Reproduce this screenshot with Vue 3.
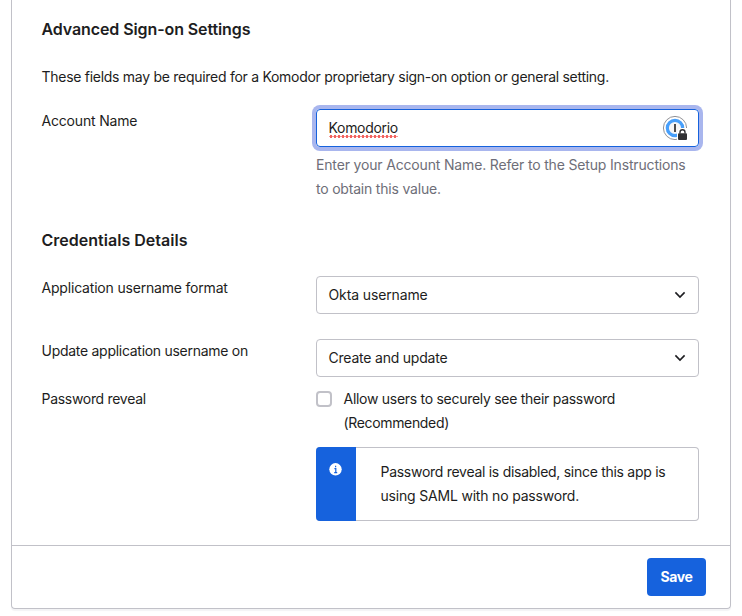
<script setup>
import { ref } from 'vue'

const accountName = ref('Komodorio')
const revealPassword = ref(false)
const selects = [
  { label: 'Application username format', value: 'Okta username', labelClass: 't-format', valueClass: 't-okta' },
  { label: 'Update application username on', value: 'Create and update', labelClass: 't-update', valueClass: 't-create' },
]
</script>

<template>
  <main class="page">
    <section class="card">
      <div class="content">
        <h2><span class="t-adv">Advanced Sign-on Settings</span></h2>
        <p class="intro"><span class="t-intro">These fields may be required for a Komodor proprietary sign-on option or general setting.</span></p>

        <div class="row account">
          <div class="label"><span class="t-account">Account Name</span></div>
          <div>
            <div class="box input">
              <span class="misspelled t-komo">{{ accountName }}</span>
              <svg class="onepass" width="26" height="26" viewBox="0 0 26 26">
                <circle cx="13" cy="13" r="11.6" fill="#fff" stroke="#85858a" stroke-width="0.9" />
                <circle cx="13" cy="13" r="7.7" fill="#f5f5f6" stroke="#479ffb" stroke-width="3.2" />
                <path d="M13 9v8" stroke="#4a4a4c" stroke-width="2" />
                <path d="M15 26V18.2c0-3 2.3-5.2 5.4-5.2H26V26z" fill="#fff" />
                <path d="M18 18.4v-1.2a2.5 2.5 0 0 1 5 0v1.2" fill="none" stroke="#303033" stroke-width="1.4" />
                <rect x="16" y="18.2" width="9" height="6.8" rx="1" fill="#303033" />
              </svg>
            </div>
            <div class="hint">
              <span class="t-hint1">Enter your Account Name. Refer to the Setup Instructions</span><br>
              <span class="t-hint2">to obtain this value.</span>
            </div>
          </div>
        </div>

        <h2 class="credentials"><span class="t-cred">Credentials Details</span></h2>

        <div v-for="item in selects" :key="item.label" class="row select-row">
          <div class="label"><span :class="item.labelClass">{{ item.label }}</span></div>
          <div class="box select">
            <span :class="item.valueClass">{{ item.value }}</span>
            <svg width="12" height="8" viewBox="0 0 12 8">
              <path d="M1.4 1.4 6 6l4.6-4.6" fill="none" stroke="#1d1d21" stroke-width="1.6" />
            </svg>
          </div>
        </div>

        <div class="row reveal">
          <div class="label"><span class="t-reveal">Password reveal</span></div>
          <div>
            <label class="check">
              <input v-model="revealPassword" type="checkbox">
              <span>
                <span class="t-allow">Allow users to securely see their password</span><br>
                <span class="t-rec">(Recommended)</span>
              </span>
            </label>
            <div class="notice">
              <div class="notice-icon">
                <svg width="13" height="13" viewBox="0 0 13 13">
                  <circle cx="6.5" cy="6.3" r="6.2" fill="#fff" />
                  <path d="M5.4 5.6h1.4v3.8M5.2 9.6h3M6.6 2.7v1.6" fill="none" stroke="#1662dd" stroke-width="1.2" />
                </svg>
              </div>
              <div class="notice-text">
                <span class="t-note1">Password reveal is disabled, since this app is</span><br>
                <span class="t-note2">using SAML with no password.</span>
              </div>
            </div>
          </div>
        </div>
      </div>
      <footer>
        <button type="button"><span class="t-save">Save</span></button>
      </footer>
    </section>
  </main>
</template>

<style>
body {
  margin: 0;
  background: #fff;
}
</style>

<style scoped>
.page {
  box-sizing: border-box;
  height: 616px;
  overflow: hidden;
  padding: 0 11px;
  color: #1d1d21;
  font: 14px/24px Inter, "Liberation Sans", sans-serif;
  white-space: nowrap;
}
.card {
  box-sizing: border-box;
  width: 720px;
  height: 609px;
  border: 1px solid #c1c1c8;
  border-top: 0;
  border-radius: 0 0 4px 4px;
  box-shadow: 0 2px 1px #f3f3f5;
}
.content {
  box-sizing: border-box;
  height: 545px;
  padding: 17px 31px 0 29.5px;
}
h2 {
  margin: 0;
  font-size: 16px;
  line-height: 24px;
  font-weight: 600;
}
.intro {
  margin: 24px 0 0;
}
.row {
  display: grid;
  grid-template-columns: 274.5px 383px;
}
.account {
  margin-top: 20px;
}
.box {
  box-sizing: border-box;
  display: flex;
  align-items: center;
  justify-content: space-between;
  height: 38px;
  padding: 0 12px 0 11.5px;
  border: 1px solid #c1c1c8;
  border-radius: 4px;
}
.input {
  padding-right: 10px;
  border-color: #1662dd;
  box-shadow: 0 0 0 4px #a9b6ee;
}
.misspelled {
  line-height: 17px;
  padding-bottom: 2px;
  background: radial-gradient(circle, #f2635f 1.35px, transparent 1.8px) 0 100% / 4px 3px repeat-x;
}
.hint {
  margin-top: 6px;
  color: #6e6e78;
}
.credentials {
  margin-top: 27px;
}
.select-row {
  margin-top: 25px;
}
.credentials + .select-row {
  margin-top: 24px;
}
.reveal {
  margin-top: 10px;
}
.check {
  display: flex;
  gap: 11.5px;
}
.check input {
  appearance: none;
  box-sizing: border-box;
  width: 16px;
  height: 16px;
  margin: 4px 0 0;
  border: 2px solid #c1c1c8;
  border-radius: 4px;
}
.notice {
  box-sizing: border-box;
  display: flex;
  height: 74px;
  margin-top: 12px;
  border: 1px solid #c1c1c8;
  border-left: 0;
  border-radius: 4px;
}
.notice-icon {
  box-sizing: border-box;
  width: 40px;
  margin: -1px 0;
  padding: 16px 0 0 13px;
  background: #1662dd;
  border-radius: 4px 0 0 4px;
  line-height: 0;
}
.notice-text {
  padding: 12px 0 0 24.5px;
}
footer {
  box-sizing: border-box;
  height: 63px;
  display: flex;
  justify-content: flex-end;
  padding: 12px 24px;
  border-top: 1px solid #c1c1c8;
}
button {
  width: 59px;
  height: 38px;
  padding: 0;
  border: 0;
  border-radius: 4px;
  background: #1662dd;
  color: #fff;
  font: 700 14px/24px Inter, "Liberation Sans", sans-serif;
}
.t-adv { letter-spacing: -0.1px; }
.t-cred { letter-spacing: 0.02px; }
.t-intro { letter-spacing: -0.28px; }
.t-account { letter-spacing: -0.18px; }
.t-komo { letter-spacing: -0.3px; }
.t-hint1 { letter-spacing: -0.165px; }
.t-hint2 { letter-spacing: -0.2px; }
.t-format { letter-spacing: -0.19px; }
.t-update { letter-spacing: -0.28px; }
.t-okta { letter-spacing: -0.12px; }
.t-create { letter-spacing: -0.21px; }
.t-reveal { letter-spacing: -0.3px; }
.t-allow { letter-spacing: -0.28px; }
.t-rec { letter-spacing: -0.34px; }
.t-note1 { letter-spacing: -0.28px; }
.t-note2 { letter-spacing: -0.19px; }
.t-save { letter-spacing: -0.4px; }
</style>
